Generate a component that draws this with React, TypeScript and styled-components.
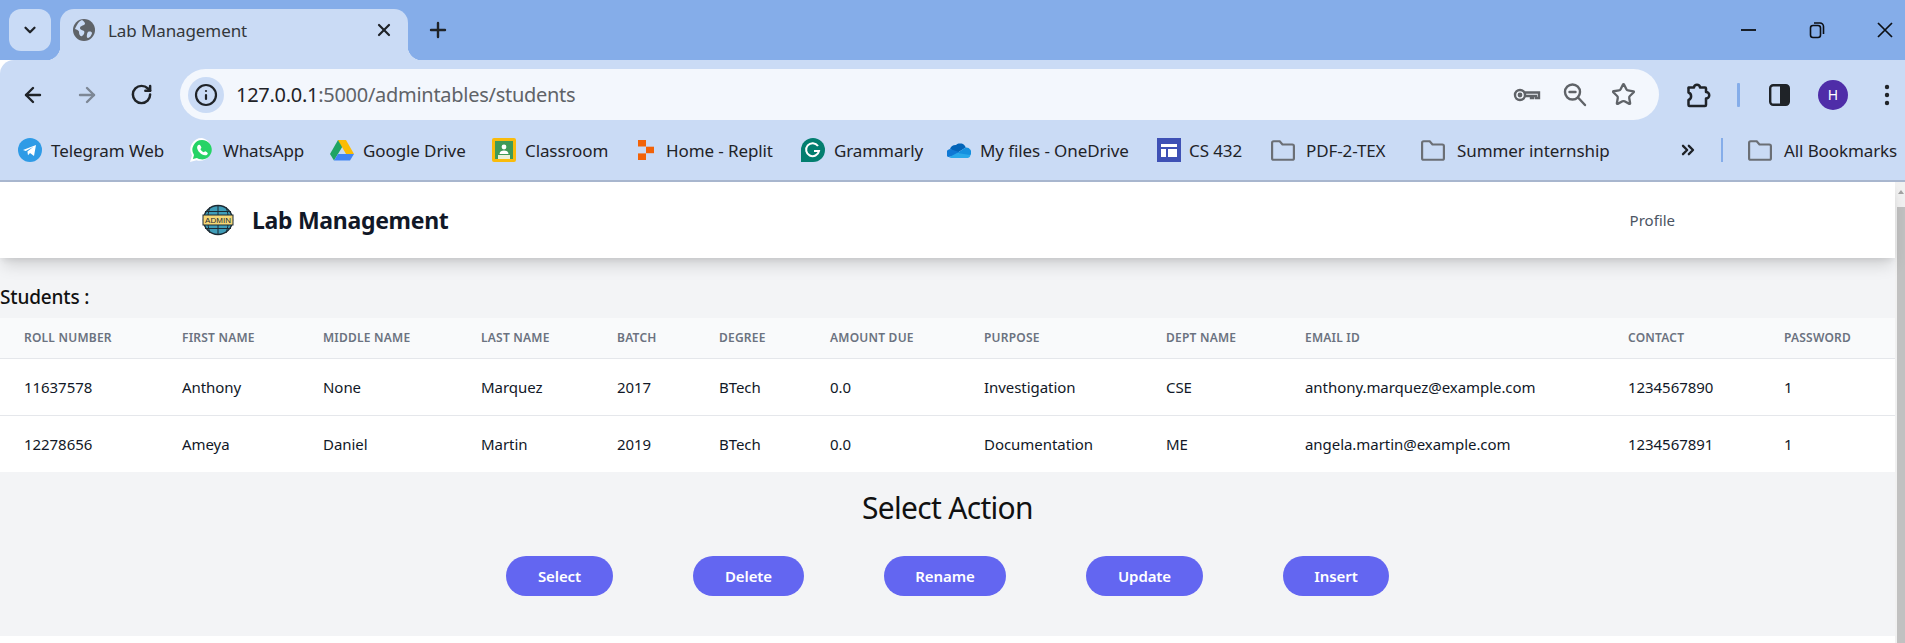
import React from "react";
import styled, { createGlobalStyle } from "styled-components";
import { ArrowLeft, ArrowRight, RotateCw, Info, Star, X, Plus, ChevronDown, ChevronsRight } from "lucide-react";

const Global = createGlobalStyle`
  html, body { margin: 0; padding: 0; height: 100%; overflow: hidden; background: #fff; }
  * { box-sizing: border-box; }
  #root { height: 100%; }
`;
const sans = `"Noto Sans", "Open Sans", Arial, sans-serif`;

const Frame = styled.div`width: 1905px; height: 643px; display: flex; flex-direction: column; font-family: ${sans}; overflow: hidden;`;
const TabStrip = styled.div`height: 60px; background: #85ade9; display: flex; align-items: flex-start; padding: 9px 0 0 9px; flex: none;`;
const TabMenu = styled.div`position: relative; z-index: 1; width: 42px; height: 42px; border-radius: 12px; background: #c9dbf6; display: flex; align-items: center; justify-content: center; color: #1f2328; margin-right: 9px;`;
const Tab = styled.div`
  position: relative; width: 348px; height: 51px; background: #cadbf5; border-radius: 14px 14px 0 0;
  display: flex; align-items: center; padding: 0 14px 9px 13px; color: #3c4043;
  &::before, &::after { content: ""; position: absolute; bottom: 0; width: 14px; height: 14px; }
  &::before { left: -14px; background: radial-gradient(circle at 0 0, #85ade9 14px, #cadbf5 14.5px); }
  &::after { right: -14px; background: radial-gradient(circle at 100% 0, #85ade9 14px, #cadbf5 14.5px); }
`;
const TabTitle = styled.span`flex: 1; margin-left: 13px; font-size: 17px; letter-spacing: -0.1px; color: #33373b;`;
const NewTab = styled.div`margin: 9px 0 0 18px; color: #1f2328; display: flex;`;
const Spacer = styled.div`flex: 1;`;
const WinControls = styled.div`display: flex; height: 42px; align-items: center; gap: 28px; color: #0c0f14;`;
const WinBtn = styled.div`width: 40px; display: flex; justify-content: center;`;

const Toolbar = styled.div`height: 60px; background: #cadbf5; display: flex; align-items: center; padding: 9px 0 0 6px; flex: none; border-top-left-radius: 14px; margin-top: 0;`;
const NavBtn = styled.div<{ $dim?: boolean }>`width: 54px; display: flex; justify-content: center; color: ${(p) => (p.$dim ? "#7d8795" : "#1f2328")};`;
const Omnibox = styled.div`width: 1479px; height: 51px; margin-left: 12px; background: #f3f7fd; border-radius: 26px; display: flex; align-items: center; padding: 0 12px 0 8px; flex: none;`;
const InfoChip = styled.div`width: 36px; height: 36px; border-radius: 50%; background: #cadbf5; display: flex; align-items: center; justify-content: center; color: #1f2328;`;
const Url = styled.div`flex: 1; margin-left: 12px; font-size: 20px; letter-spacing: -0.28px; color: #5f6368;`;
const UrlHost = styled.span`color: #1f2328;`;
const OmniIcon = styled.div`width: 48px; display: flex; justify-content: center; color: #5f6368;`;
const ToolSlot = styled.div<{ $w: number }>`width: ${(p) => p.$w}px; display: flex; justify-content: center; color: #1f2328; flex: none;`;
const Sep = styled.div`width: 3px; height: 24px; border-radius: 1px; background: #85ade9; flex: none;`;
const Avatar = styled.div`width: 30px; height: 30px; border-radius: 50%; background: #4f2da8; color: #fff; font-size: 14px; display: flex; align-items: center; justify-content: center; flex: none;`;
const Dots = styled.div`width: 16px; margin-left: 31px; display: flex; justify-content: center; flex: none; color: #1f2328;`;

const BookmarkBar = styled.div`height: 62px; background: #cadbf5; border-bottom: 2px solid #a9b7cf; display: flex; align-items: center; padding: 0 0 0 18px; flex: none;`;
const Bookmark = styled.div<{ $w: number; $gap: number }>`width: ${(p) => p.$w}px; flex: none; display: flex; align-items: center; gap: ${(p) => p.$gap}px;`;
const BookmarkLabel = styled.span`font-size: 17px; letter-spacing: -0.1px; color: #1f2328; white-space: nowrap;`;
const IconBox = styled.span`width: 24px; height: 24px; display: flex; flex: none;`;
const BarSep = styled.div`width: 2px; height: 24px; background: #85ade9; flex: none; margin: 0 25px 0 0;`;
const Overflow = styled.div`width: 20px; display: flex; flex: none; margin-right: 23px; color: #1f2328;`;

const Viewport = styled.div`flex: 1; display: flex; min-height: 0;`;
const Page = styled.div`flex: 1; display: flex; flex-direction: column; background: #fff; min-width: 0;`;
const Scrollbar = styled.div`width: 10px; background: #f1f1f1; display: flex; flex-direction: column; flex: none; align-items: flex-end;`;
const ScrollArrow = styled.div`height: 25px; width: 100%; display: flex; justify-content: center; padding: 8px 0 0 2px;
  &::before { content: ""; width: 0; height: 0; border-left: 3.5px solid transparent; border-right: 3.5px solid transparent; border-bottom: 4px solid #a3a3a3; }
`;
const ScrollThumb = styled.div`flex: 1; width: 8px; background: #c1c1c1;`;

const Header = styled.header`position: relative; z-index: 1; height: 76px; flex: none; background: #fff; display: flex; align-items: center; padding: 0 220px 0 202px; box-shadow: 0 10px 15px -3px rgba(0,0,0,.14), 0 4px 6px -2px rgba(0,0,0,.08);`;
const Brand = styled.div`font-size: 23px; font-weight: 700; color: #111827; margin-left: 18px; letter-spacing: -0.3px; flex: 1;`;
const NavLink = styled.a`font-size: 15px; color: #4b5563; letter-spacing: 0; margin-top: -1px;`;

const Body = styled.main`background: #f3f4f6; flex: none;`;
const Heading = styled.h2`margin: 0; height: 60px; padding-top: 26px; font-size: 19px; line-height: 26px; font-weight: 500; color: #111; letter-spacing: -0.15px;`;
const Table = styled.table`width: 100%; table-layout: fixed; border-collapse: collapse; background: #fff;`;
const Th = styled.th`height: 40px; background: #f9fafb; border-bottom: 1px solid #e5e7eb; text-align: left; padding: 0 0 0 24px; font-size: 12px; font-weight: 600; text-transform: uppercase; letter-spacing: 0.22px; color: #6b7280; white-space: nowrap;`;
const Td = styled.td`height: 57px; border-bottom: 1px solid #e5e7eb; padding: 1px 0 0 24px; font-size: 15px; letter-spacing: -0.05px; color: #111827; white-space: nowrap;
  tr:last-child & { border-bottom: 0; }`;
const Actions = styled.section`height: 164px; padding-top: 18px; display: flex; flex-direction: column; align-items: center;`;
const ActionTitle = styled.h2`margin: 0 0 30px; font-size: 30px; line-height: 36px; font-weight: 400; color: #111; letter-spacing: -0.7px;`;
const ButtonRow = styled.div`display: flex; gap: 80px;`;
const ActionBtn = styled.button<{ $w: number }>`width: ${(p) => p.$w}px; height: 40px; border: 0; border-radius: 20px; background: #6366f1; color: #fff; font-family: ${sans}; font-size: 15px; font-weight: 600; letter-spacing: -0.1px; padding: 0;`;

const Telegram = () => (<svg viewBox="0 0 24 24" width="24" height="24"><circle cx="12" cy="12" r="12" fill="#2f9be6" /><path d="M5 12l13-5-2 11-4-3-2 2.2-.6-3.7 6-4.8-7.6 4.4z" fill="#fff" /></svg>);
const WhatsApp = () => (<svg viewBox="0 0 24 24" width="24" height="24"><path d="M12 0A11.500 11.500 0 0 0 2 17.300L0 24l6.500-1.700A11.500 11.500 0 1 0 12 0z" fill="#fff" /><path d="M12 2a9.700 9.700 0 0 0-8 15l-1.100 4 4-1.100A9.700 9.700 0 1 0 12 2z" fill="#25d366" /><path d="M9 6.700c-.7 0-1.900 1.100-1.900 2.900 0 3.300 4.300 7.700 8 7.700 1.600 0 2.700-1.200 2.700-2.100 0-.5-2.200-1.900-2.700-1.900-.4 0-.9 1-1.300 1-.9 0-3.300-2.300-3.300-3.200 0-.4.900-.9.900-1.300 0-.7-1.200-3.100-1.800-3.100z" fill="#fff" /></svg>);
const Drive = () => (<svg viewBox="0 0 24 22" width="24" height="24"><path d="M8 1h8l-4.200 7.600L8 1z" fill="#188038" /><path d="M8 1L0 15l4 6.500L12.200 8z" fill="#1fa463" /><path d="M16 1l8 14h-8L8 1z" fill="#fbbc04" /><path d="M24 15l-4 6.500H4L8 15z" fill="#4285f4" /></svg>);
const Classroom = () => (<svg viewBox="0 0 24 24" width="24" height="24"><rect width="24" height="24" rx="2" fill="#f9bb0b" /><rect x="3" y="3" width="18" height="18" fill="#3f9a58" /><rect x="6" y="17" width="12" height="4" fill="#e8f0d8" /><circle cx="12" cy="9" r="2.400" fill="#fff" /><path d="M7.500 16c0-2.600 2.200-3.600 4.500-3.600s4.500 1 4.500 3.600z" fill="#fff" /></svg>);
const Replit = () => (<svg viewBox="0 0 24 24" width="24" height="24"><rect x="4" y="2" width="8" height="6.500" fill="#f26207" /><rect x="12" y="8.700" width="8" height="6.500" fill="#f26207" /><rect x="4" y="15.400" width="8" height="6.600" fill="#f26207" /></svg>);
const Grammarly = () => (<svg viewBox="0 0 24 24" width="24" height="24"><path d="M12 0a12 12 0 0 0-12 12v12h12a12 12 0 0 0 0-24z" fill="#027e6f" /><path d="M17 8a6.500 6.500 0 1 0 1 5h-5" fill="none" stroke="#fff" strokeWidth="2" /></svg>);
const OneDrive = () => (<svg viewBox="0 0 24 24" width="24" height="24"><path d="M9 7a6 6 0 0 1 9.800 2.500L10 15 3 11a6 6 0 0 1 6-4z" fill="#0364b8" /><path d="M3 11a4.500 4.500 0 0 0-2 8l8-1 3-4z" fill="#0f78d4" /><path d="M18.800 9.500A5 5 0 0 1 23.500 17l-7 1-6.500-3z" fill="#1490df" /><path d="M10 15l-8 4.300c.6.500 1.500.7 2.500.7H21a3.500 3.500 0 0 0 2.500-3z" fill="#28a8ea" /></svg>);
const Sites = () => (<svg viewBox="0 0 24 24" width="24" height="24"><rect width="24" height="24" fill="#3f51b5" /><rect x="4" y="6" width="16" height="3" fill="#fff" /><rect x="4" y="11" width="5" height="8" fill="#fff" /><rect x="11" y="11" width="9" height="8" fill="#fff" /></svg>);
const Folder = () => (<svg viewBox="1 3 22 19" width="24" height="21" style={{ marginTop: 2 }}><path d="M2 5.500A1.500 1.500 0 0 1 3.500 4H9l2.500 3h9A1.500 1.500 0 0 1 22 8.500v11a1.500 1.500 0 0 1-1.500 1.500h-17A1.500 1.500 0 0 1 2 19.500z" fill="none" stroke="#6b6f75" strokeWidth="2" /></svg>);
const Globe = () => (<svg viewBox="0 0 22 22" width="22" height="22"><circle cx="11" cy="11" r="11" fill="#5f6368" /><path d="M9 1c3 2 4 4 2 5S7 7 7 9s3 2 4 3 0 4-2 5-3-2-3-4-4-3-4-3 3-8 7-9zM15 13c2-1 4 0 4 1s-2 5-4 5-1-5 0-6z" fill="#cadbf5" /></svg>);
const KeyIcon = () => (<svg viewBox="0 0 28 20" width="28" height="20" fill="none" stroke="#5f6368" strokeWidth="2.400"><circle cx="7" cy="10" r="5" /><circle cx="7" cy="10" r="1.200" fill="#5f6368" /><path d="M12 7.500h14v5.500h-3v-2h-3v2h-2v-2h-6" /></svg>);
const MagnifierMinus = () => (<svg viewBox="0 0 24 26" width="24" height="26" fill="none" stroke="#5f6368" strokeWidth="2.400" strokeLinecap="round"><circle cx="9.500" cy="10" r="7.500" /><path d="M15 15.500l7 7.500M6.500 10h6" /></svg>);
const PuzzleIcon = () => (<svg viewBox="0 0 26 26" width="26" height="26" fill="none" stroke="#1f2328" strokeWidth="2.500" strokeLinejoin="round"><path d="M3.500 5.500H9a3 2.800 0 0 1 6 0h5a1 1 0 0 1 1 1V10a3 3 0 0 1 0 6.500V23a1 1 0 0 1-1 1H4.500a1 1 0 0 1-1-1V18a4 4 0 0 0 0-7.500V6.500a1 1 0 0 1 0-1z" /></svg>);
const PanelIcon = () => (<svg viewBox="0 0 21 22" width="21" height="22"><rect x="1.200" y="1.200" width="18.600" height="19.600" rx="3" fill="none" stroke="#1f2328" strokeWidth="2.400" /><path d="M11 1h6a3 3 0 0 1 3 3v14a3 3 0 0 1-3 3h-6z" fill="#1f2328" /></svg>);
const DotsIcon = () => (<svg viewBox="0 0 6 22" width="6" height="22"><circle cx="3" cy="3" r="2.200" fill="currentColor" /><circle cx="3" cy="11" r="2.200" fill="currentColor" /><circle cx="3" cy="19" r="2.200" fill="currentColor" /></svg>);
const Minimize = () => (<svg width="16" height="16" viewBox="0 0 16 16"><path d="M0 8h15" stroke="currentColor" strokeWidth="1.800" /></svg>);
const Restore = () => (<svg width="16" height="18" viewBox="0 0 16 18" fill="none" stroke="currentColor" strokeWidth="1.600"><rect x="1.500" y="4.500" width="10" height="12" rx="2.500" /><path d="M5 2h6a3.500 3.500 0 0 1 3.500 3.500V13" /></svg>);
const CloseWin = () => (<svg width="18" height="18" viewBox="0 0 18 18"><path d="M2 2l14 14M16 2L2 16" stroke="currentColor" strokeWidth="1.700" /></svg>);
const AdminLogo = () => (
  <svg viewBox="0 0 32 32" width="32" height="32" style={{ flex: "none" }}>
    <circle cx="16" cy="16" r="14.500" fill="#3f9db8" stroke="#1d2b34" strokeWidth="1.300" />
    <path d="M16 1.500v29M8 3c-3 8-3 18 0 26M24 3c3 8 3 18 0 26M3 7.500h26M3 24.500h26" fill="none" stroke="#1d2b34" strokeWidth="1" />
    <rect x="1" y="11" width="30" height="10" fill="#f6d876" stroke="#1d2b34" strokeWidth="1" />
    <text x="16" y="19" fontSize="8" textAnchor="middle" fontFamily="Liberation Sans" fill="#1d2b34" textLength="26">ADMIN</text>
  </svg>
);

const bookmarks: [string, React.FC, number, number][] = [
  ["Telegram Web", Telegram, 172, 9], ["WhatsApp", WhatsApp, 140, 9], ["Google Drive", Drive, 162, 9], ["Classroom", Classroom, 142, 9],
  ["Home - Replit", Replit, 167, 8], ["Grammarly", Grammarly, 146, 9], ["My files - OneDrive", OneDrive, 210, 9], ["CS 432", Sites, 114, 8],
  ["PDF-2-TEX", Folder, 150, 11], ["Summer internship", Folder, 257, 12],
];

const cols: [string, number][] = [
  ["Roll Number", 158], ["First Name", 141], ["Middle Name", 158], ["Last Name", 136], ["Batch", 102], ["Degree", 111],
  ["Amount Due", 154], ["Purpose", 182], ["Dept Name", 139], ["Email ID", 323], ["Contact", 156], ["Password", 135],
];
const rows = [
  ["11637578", "Anthony", "None", "Marquez", "2017", "BTech", "0.0", "Investigation", "CSE", "anthony.marquez@example.com", "1234567890", "1"],
  ["12278656", "Ameya", "Daniel", "Martin", "2019", "BTech", "0.0", "Documentation", "ME", "angela.martin@example.com", "1234567891", "1"],
];
const actions: [string, number][] = [["Select", 107], ["Delete", 111], ["Rename", 122], ["Update", 117], ["Insert", 106]];

export default function App() {
  return (
    <Frame>
      <Global />
      <TabStrip>
        <TabMenu><ChevronDown size={18} strokeWidth={3} /></TabMenu>
        <Tab>
          <Globe />
          <TabTitle>Lab Management</TabTitle>
          <X size={20} strokeWidth={2.6} color="#1f2328" />
        </Tab>
        <NewTab><Plus size={24} strokeWidth={2.4} /></NewTab>
        <Spacer />
        <WinControls>
          <WinBtn><Minimize /></WinBtn>
          <WinBtn><Restore /></WinBtn>
          <WinBtn><CloseWin /></WinBtn>
        </WinControls>
      </TabStrip>
      <Toolbar>
        <NavBtn><ArrowLeft size={24} strokeWidth={2.4} /></NavBtn>
        <NavBtn $dim><ArrowRight size={24} strokeWidth={2.4} /></NavBtn>
        <NavBtn><RotateCw size={23} strokeWidth={2.6} /></NavBtn>
        <Omnibox>
          <InfoChip><Info size={24} strokeWidth={2.2} /></InfoChip>
          <Url><UrlHost>127.0.0.1</UrlHost>:5000/admintables/students</Url>
          <OmniIcon><KeyIcon /></OmniIcon>
          <OmniIcon><MagnifierMinus /></OmniIcon>
          <OmniIcon><Star size={25} strokeWidth={2.2} /></OmniIcon>
        </Omnibox>
        <ToolSlot $w={78}><PuzzleIcon /></ToolSlot>
        <Sep />
        <ToolSlot $w={78}><PanelIcon /></ToolSlot>
        <Avatar>H</Avatar>
        <Dots><DotsIcon /></Dots>
      </Toolbar>
      <BookmarkBar>
        {bookmarks.map(([name, Icon, w, gap]) => (
          <Bookmark key={name} $w={w} $gap={gap}>
            <IconBox><Icon /></IconBox>
            <BookmarkLabel>{name}</BookmarkLabel>
          </Bookmark>
        ))}
        <Overflow><ChevronsRight size={20} strokeWidth={2.8} /></Overflow>
        <BarSep />
        <Bookmark $w={160} $gap={12}>
          <IconBox><Folder /></IconBox>
          <BookmarkLabel>All Bookmarks</BookmarkLabel>
        </Bookmark>
      </BookmarkBar>
      <Viewport>
        <Page>
          <Header>
            <AdminLogo />
            <Brand>Lab Management</Brand>
            <NavLink>Profile</NavLink>
          </Header>
          <Body>
            <Heading>Students :</Heading>
            <Table>
              <colgroup>{cols.map(([n, w]) => <col key={n} width={w} />)}</colgroup>
              <thead><tr>{cols.map(([n]) => <Th key={n}>{n}</Th>)}</tr></thead>
              <tbody>
                {rows.map((r) => <tr key={r[0]}>{r.map((c, i) => <Td key={i}>{c}</Td>)}</tr>)}
              </tbody>
            </Table>
            <Actions>
              <ActionTitle>Select Action</ActionTitle>
              <ButtonRow>{actions.map(([a, w]) => <ActionBtn key={a} $w={w}>{a}</ActionBtn>)}</ButtonRow>
            </Actions>
          </Body>
        </Page>
        <Scrollbar><ScrollArrow /><ScrollThumb /></Scrollbar>
      </Viewport>
    </Frame>
  );
}
